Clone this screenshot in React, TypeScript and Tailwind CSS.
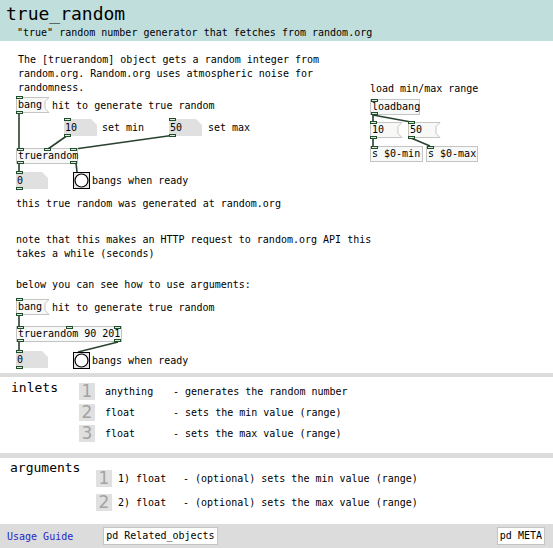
import React from "react";

const mono = "font-['DejaVu_Sans_Mono',monospace]";

const Ports = ({ n, bottom }: { n: number; bottom?: boolean }) => (
  <div className={`absolute inset-x-0 flex justify-between ${bottom ? "bottom-[-1px]" : "top-[-1px]"}`}>
    {Array.from({ length: n }).map((_, i) => (
      <div key={i} className="w-[7px] h-[3px] bg-[#dfe8df] border border-[#1f4f2a]" />
    ))}
  </div>
);

const Obj = ({ pos, w, text, ins = 1, outs = 1 }: { pos: string; w: string; text: string; ins?: number; outs?: number }) => (
  <div className={`absolute ${pos} ${w} h-[16px] border border-[#c4c4c4] bg-[#f7f8f8] text-[10px] leading-[14px] pl-[1px] whitespace-nowrap text-black`}>
    {text}
    {ins > 0 && <Ports n={ins} />}
    {outs > 0 && <Ports n={outs} bottom />}
  </div>
);

const Msg = ({ pos, w, width, text }: { pos: string; w: string; width: number; text: string }) => (
  <div className={`absolute ${pos} ${w} h-[16px] text-[10px] leading-[16px] pl-[2px] whitespace-nowrap text-black`}>
    <svg className="absolute left-0 top-0 overflow-visible" width={width} height={16}>
      <polygon
        points={`0.5,0.5 ${width + 3},0.5 ${width - 1},4.5 ${width - 1},11.5 ${width + 3},15.5 0.5,15.5`}
        fill="#f8f8f7"
        stroke="#c4c4c4"
      />
    </svg>
    <span className="relative">{text}</span>
    <Ports n={1} />
    <Ports n={1} bottom />
  </div>
);

const Num = ({ pos, w, width, text, ins = 1 }: { pos: string; w: string; width: number; text: string; ins?: number }) => (
  <div className={`absolute ${pos} ${w} h-[17px] text-[10px] leading-[17px] pl-[1px] whitespace-nowrap text-black`}>
    <svg className="absolute left-0 top-0" width={width} height={17}>
      <polygon points={`0,0 ${width - 6},0 ${width},6 ${width},17 0,17`} fill="#e0e0e0" />
    </svg>
    <span className="relative">{text}</span>
    {ins > 0 && <Ports n={1} />}
    <Ports n={1} bottom />
  </div>
);

const Bng = ({ pos }: { pos: string }) => (
  <div className={`absolute ${pos} w-[17px] h-[17px] border border-black bg-[#e8e8e8]`}>
    <svg width={15} height={15} className="block">
      <circle cx={7.5} cy={7.5} r={6.5} fill="#ffffff" stroke="#000" strokeWidth={1.2} />
    </svg>
  </div>
);

const Cmt = ({ pos, children }: { pos: string; children: React.ReactNode }) => (
  <div className={`absolute ${pos} text-[10px] leading-[14px] whitespace-pre text-black`}>{children}</div>
);

const wires: [number, number, number, number][] = [
  [19, 72, 19, 107],
  [68, 94, 48, 108],
  [175, 94, 75, 108],
  [19, 122, 19, 131],
  [76, 122, 77, 131],
  [19, 274, 19, 285],
  [19, 301, 19, 310],
  [118, 301, 78, 311],
  [373, 74, 373, 81],
  [373, 74, 411, 81],
  [373, 97, 373, 105],
  [411, 97, 430, 105],
];

const Digit = ({ d }: { d: string }) => (
  <div className="w-[16px] h-[17px] bg-[#e0e0e0] flex items-center justify-center text-[17px] leading-none text-[#a3a3a3] font-['DejaVu_Sans',sans-serif]">
    {d}
  </div>
);

export default function App() {
  return (
    <div className={`w-[553px] h-[548px] bg-white flex flex-col overflow-hidden ${mono}`}>
      <div className="h-[41px] bg-[#c0dedc] flex flex-col pl-[6px] pt-[3px]">
        <div className="text-[18px] leading-[22px] text-black">true_random</div>
        <div className="text-[10px] leading-[12px] pl-[11px] mt-[2px] text-black">
          "true" random number generator that fetches from random.org
        </div>
      </div>

      <div className="relative h-[332px]">
        <svg className="absolute inset-0" width={553} height={332}>
          {wires.map(([x1, y1, x2, y2], i) => (
            <line key={i} x1={x1} y1={y1} x2={x2} y2={y2} stroke="#29412f" strokeWidth={1.6} />
          ))}
        </svg>

        <Cmt pos="left-[18px] top-[12px]">
          {"The [truerandom] object gets a random integer from\nrandom.org. Random.org uses atmospheric noise for\nrandomness."}
        </Cmt>

        <Msg pos="left-[16px] top-[56px]" w="w-[30px]" width={30} text="bang" />
        <Cmt pos="left-[52px] top-[58px]">hit to generate true random</Cmt>
        <Num pos="left-[64px] top-[78px]" w="w-[33px]" width={33} text="10" />
        <Cmt pos="left-[102px] top-[80px]">set min</Cmt>
        <Num pos="left-[169px] top-[78px]" w="w-[33px]" width={33} text="50" />
        <Cmt pos="left-[208px] top-[80px]">set max</Cmt>
        <Obj pos="left-[16px] top-[107px]" w="w-[62px]" text="truerandom" ins={3} outs={2} />
        <Num pos="left-[16px] top-[131px]" w="w-[32px]" width={32} text="0" />
        <Bng pos="left-[73px] top-[131px]" />
        <Cmt pos="left-[92px] top-[133px]">bangs when ready</Cmt>

        <Cmt pos="left-[16px] top-[156px]">this true random was generated at random.org</Cmt>
        <Cmt pos="left-[16px] top-[192px]">
          {"note that this makes an HTTP request to random.org API this\ntakes a while (seconds)"}
        </Cmt>
        <Cmt pos="left-[16px] top-[237px]">below you can see how to use arguments:</Cmt>

        <Msg pos="left-[16px] top-[258px]" w="w-[30px]" width={30} text="bang" />
        <Cmt pos="left-[52px] top-[260px]">hit to generate true random</Cmt>
        <Obj pos="left-[16px] top-[285px]" w="w-[106px]" text="truerandom 90 201" ins={3} outs={2} />
        <Num pos="left-[16px] top-[310px]" w="w-[32px]" width={32} text="0" />
        <Bng pos="left-[73px] top-[311px]" />
        <Cmt pos="left-[92px] top-[313px]">bangs when ready</Cmt>

        <Cmt pos="left-[370px] top-[41px]">load min/max range</Cmt>
        <Obj pos="left-[370px] top-[58px]" w="w-[50px]" text="loadbang" ins={1} outs={1} />
        <Msg pos="left-[370px] top-[81px]" w="w-[29px]" width={29} text="10" />
        <Msg pos="left-[408px] top-[81px]" w="w-[29px]" width={29} text="50" />
        <Obj pos="left-[370px] top-[105px]" w="w-[53px]" text="s $0-min" ins={1} outs={0} />
        <Obj pos="left-[426px] top-[105px]" w="w-[52px]" text="s $0-max" ins={1} outs={0} />
      </div>

      <div className="h-[4px] bg-[#dcdcdc]" />

      <div className="h-[76px] flex">
        <div className="w-[79px] pl-[11px] pt-[3px] text-[13px] leading-[16px] text-black">inlets</div>
        <div className="flex flex-col gap-[4px] pt-[6px] text-[10px] text-black">
          {[
            ["1", "anything", "- generates the random number"],
            ["2", "float", "- sets the min value (range)"],
            ["3", "float", "- sets the max value (range)"],
          ].map(([d, t, s]) => (
            <div key={d} className="flex items-center h-[17px]">
              <Digit d={d} />
              <span className="ml-[10px] w-[68px]">{t}</span>
              <span>{s}</span>
            </div>
          ))}
        </div>
      </div>

      <div className="h-[5px] bg-[#dcdcdc]" />

      <div className="h-[66px] flex">
        <div className="w-[96px] pl-[10px] pt-[2px] text-[13px] leading-[16px] text-black">arguments</div>
        <div className="flex flex-col gap-[7px] pt-[12px] text-[10px] text-black">
          {[
            ["1", "1) float", "- (optional) sets the min value (range)"],
            ["2", "2) float", "- (optional) sets the max value (range)"],
          ].map(([d, t, s]) => (
            <div key={d} className="flex items-center h-[17px]">
              <Digit d={d} />
              <span className="ml-[6px] w-[65px]">{t}</span>
              <span>{s}</span>
            </div>
          ))}
        </div>
      </div>

      <div className="h-[24px] bg-[#dcdcdc] flex items-center pl-[7px] pr-[8px] text-[10px]">
        <span className="text-[#2727c9]">Usage Guide</span>
        <div className="ml-[30px] h-[18px] px-[2px] bg-white border border-[#c4c4c4] leading-[16px] text-black">
          pd Related_objects
        </div>
        <div className="ml-auto h-[18px] px-[2px] bg-white border border-[#c4c4c4] leading-[16px] text-black">
          pd META
        </div>
      </div>
    </div>
  );
}
